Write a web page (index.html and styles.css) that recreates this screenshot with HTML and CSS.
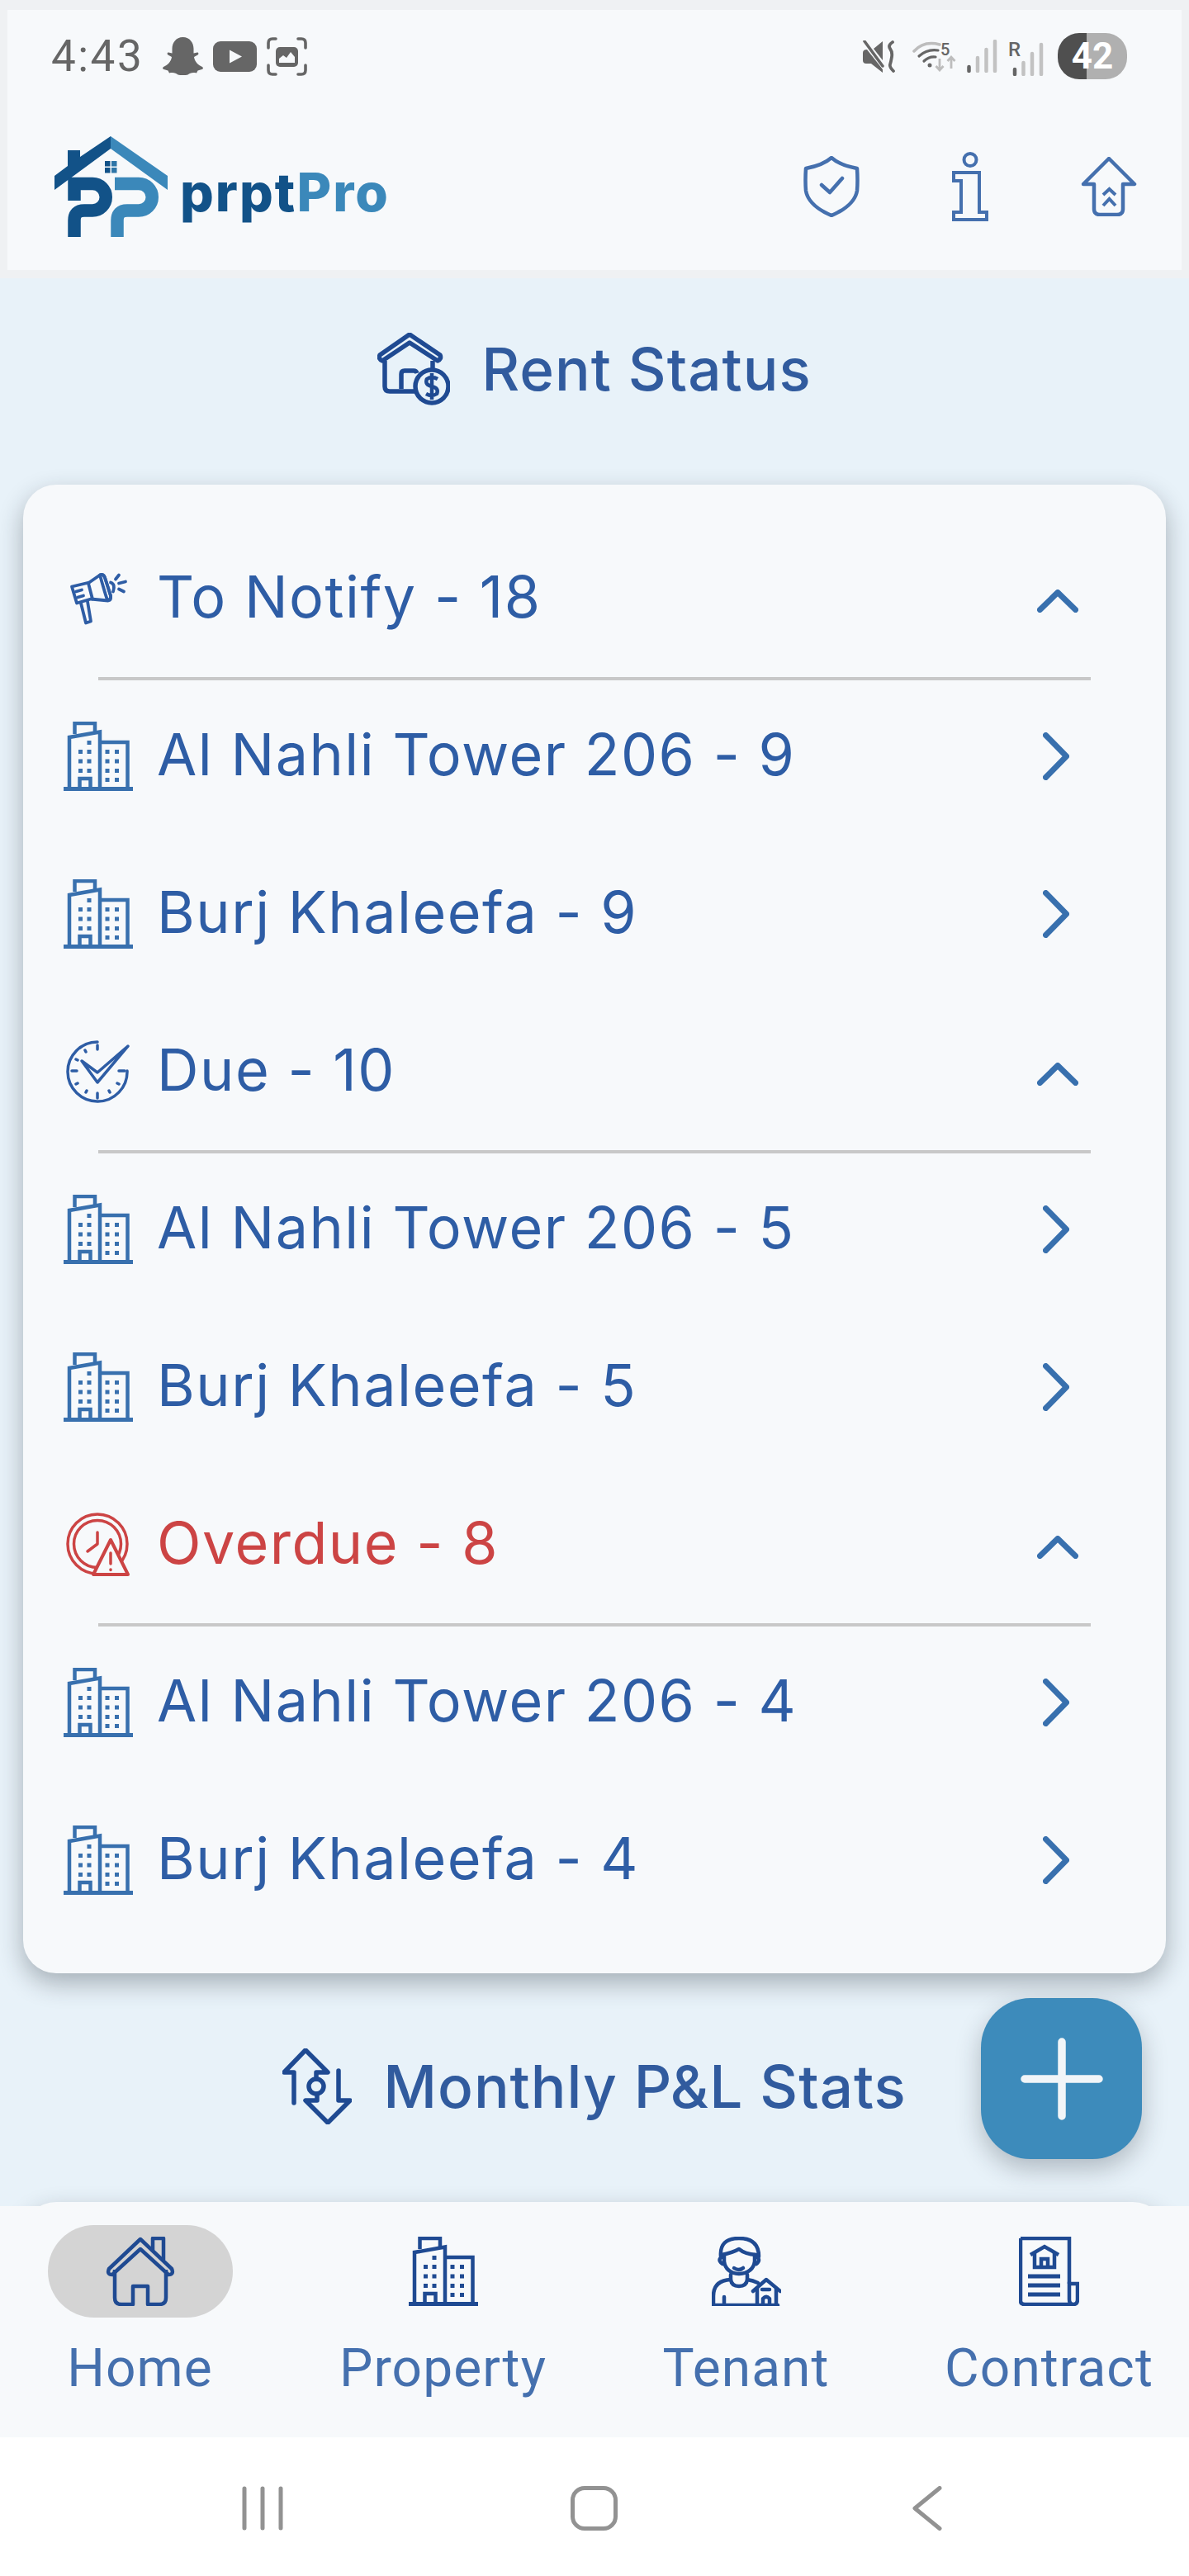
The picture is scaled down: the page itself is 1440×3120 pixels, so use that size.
FILE: index.html
```html
<!DOCTYPE html>
<html lang="en">
<head>
    <meta charset="UTF-8">
    <meta name="viewport" content="width=device-width, initial-scale=1.0">
    <title>Rent Status</title>
    <link rel="stylesheet" href="styles.css">
</head>
<body>

    <!-- Shared icons -->
    <svg class="icon-defs" aria-hidden="true">
        <symbol id="building" viewBox="0 0 84 84">
            <g fill="none" stroke="currentColor" stroke-width="4.5">
                <path d="M13.5 15V2H38V12"/>
                <path d="M7 80V19L44 12.5V80"/>
                <path d="M44 25H77.500V80"/>
                <path d="M19.500 80V69H32.500V80"/>
            </g>
            <path fill="currentColor" d="M0 79H84V84H0Z"/>
            <g fill="currentColor">
                <rect x="28.500" y="23" width="5" height="5"/>
                <rect x="18" y="34" width="5" height="5"/><rect x="28.500" y="34" width="5" height="5"/>
                <rect x="18" y="45.500" width="5" height="5"/><rect x="28.500" y="45.500" width="5" height="5"/>
                <rect x="18" y="57" width="5" height="5"/><rect x="28.500" y="57" width="5" height="5"/>
                <rect x="50.500" y="34" width="5" height="5"/><rect x="62" y="34" width="5" height="5"/>
                <rect x="50.500" y="45.500" width="5" height="5"/><rect x="62" y="45.500" width="5" height="5"/>
                <rect x="50.500" y="57" width="5" height="5"/><rect x="62" y="57" width="5" height="5"/>
                <rect x="50.500" y="68" width="5" height="5"/><rect x="62" y="68" width="5" height="5"/>
            </g>
        </symbol>
        <symbol id="chev-right" viewBox="0 0 32 58">
            <path d="M3.500 3.500L28.500 29L3.500 54.500" fill="none" stroke="currentColor" stroke-width="7" stroke-linecap="round" stroke-linejoin="round"/>
        </symbol>
        <symbol id="chev-up" viewBox="0 0 50 28">
            <path d="M3.500 24.500L25 3.500L46.500 24.500" fill="none" stroke="currentColor" stroke-width="7" stroke-linecap="round" stroke-linejoin="round"/>
        </symbol>
    </svg>

    <!-- Header -->
    <div class="top-frame">
        <div class="header">
            <div class="status-bar">
                <div class="status-left">
                    <span class="clock">4:43</span>
                    <svg class="st-ghost" viewBox="0 0 49 46"><path fill="#666" d="M24.500 0C33 0 37.500 7 37.500 14V19.500L42 18.500C43.500 18.500 44 20.500 42.500 21.500L38 24C38.500 29 43 34 48 36C49.500 37 49 38.500 47.500 39L42.500 40.500L41 43.500C36 42.500 33 43.500 30.500 45.500C26.500 46.500 22.500 46.500 18.500 45.500C16 43.500 13 42.500 8 43.500L6.500 40.500L1.500 39C0 38.500 -.5 37 1 36C6 34 10.500 29 11 24L6.500 21.500C5 20.500 5.500 18.500 7 18.500L11.500 19.500V14C11.500 7 16 0 24.500 0Z"/></svg>
                    <svg class="st-yt" viewBox="0 0 53 37"><rect width="53" height="37" rx="9" fill="#666"/><path d="M20 10.500L35 18.500L20 26.500Z" fill="#f7f9fb"/></svg>
                    <svg class="st-shot" viewBox="0 0 49 47">
                        <g fill="none" stroke="#666" stroke-width="3.600" stroke-linecap="round">
                            <path d="M2 13V7Q2 2 7 2H11"/><path d="M38 2H42Q47 2 47 7V13"/>
                            <path d="M2 34V40Q2 45 7 45H11"/><path d="M38 45H42Q47 45 47 40V34"/>
                        </g>
                        <rect x="11" y="12" width="27" height="24" rx="5" fill="#666"/>
                        <path d="M15 31V26L20 22L24 25L29 18L34 24V31Z" fill="#f7f9fb"/>
                    </svg>
                </div>
                <div class="status-right">
                    <svg class="st-mute" viewBox="0 0 40 39">
                        <path fill="#666" d="M0 15Q0 11 5 11L24 35V39L10 28H4Q0 28 0 24Z"/>
                        <path fill="#666" d="M13 10L24 1V24Z"/>
                        <path d="M3 2L26 36" stroke="#f7f9fb" stroke-width="2"/>
                        <path d="M2 1L24 31" stroke="#666" stroke-width="3.500" stroke-linecap="round"/>
                        <path d="M36 2Q30 6 33 10T35 20T33 29T37 37" fill="none" stroke="#666" stroke-width="3.800" stroke-linecap="round"/>
                    </svg>
                    <svg class="st-wifi" viewBox="0 0 53 38">
                        <path d="M2 13Q14 0 33 5" fill="none" stroke="#bdbdbd" stroke-width="3.500" stroke-linecap="round"/>
                        <path d="M8 19Q18 10 31 12" fill="none" stroke="#666" stroke-width="3.200" stroke-linecap="round"/>
                        <path d="M14 25Q20 19 28 20" fill="none" stroke="#666" stroke-width="3.200" stroke-linecap="round"/>
                        <circle cx="21" cy="30" r="2.500" fill="#666"/>
                        <text x="34" y="18" class="st-five">5</text>
                        <path d="M33 22V36M28.500 31L33 36L37.500 31" fill="none" stroke="#bdbdbd" stroke-width="2.800"/>
                        <path d="M47 34V20M42.500 25L47 20L51.500 25" fill="none" stroke="#bdbdbd" stroke-width="2.800"/>
                    </svg>
                    <svg class="st-signal" viewBox="0 0 37 40">
                        <g fill="none" stroke-width="4.500" stroke-linecap="round">
                            <path d="M2.500 33V38" stroke="#666"/>
                            <path d="M13 22V38" stroke="#c2c2c2"/><path d="M23.500 12V38" stroke="#c2c2c2"/><path d="M34 2V38" stroke="#c2c2c2"/>
                        </g>
                    </svg>
                    <svg class="st-roam" viewBox="0 -6 43 47">
                        <text x="0" y="17" class="st-r">R</text>
                        <g fill="none" stroke-width="4.500" stroke-linecap="round">
                            <path d="M8 33V39" stroke="#666"/>
                            <path d="M18.500 25V39" stroke="#c2c2c2"/><path d="M29 14V39" stroke="#c2c2c2"/><path d="M40 3V39" stroke="#c2c2c2"/>
                        </g>
                    </svg>
                    <div class="battery"><span>42</span></div>
                </div>
            </div>

            <div class="app-bar">
                <div class="logo">
                    <svg class="logo-mark" viewBox="0 0 137 122">
                        <path fill="#125288" d="M68 0V15L0 65V48L16 36V17H31V25Z"/>
                        <path fill="#3b88ba" d="M68 0L137 48V65L68 15Z"/>
                        <g fill="#125288"><rect x="61" y="30" width="6.500" height="6.500"/><rect x="61" y="38" width="6.500" height="6.500"/></g>
                        <g fill="#2f76a8"><rect x="69" y="30" width="6.500" height="6.500"/><rect x="69" y="38" width="6.500" height="6.500"/></g>
                        <g fill="none" stroke-width="15.500">
                            <path stroke="#125288" d="M24 78V57.500H46A16 16 0 0 1 46 90H36Q24 90 24 102V122"/>
                            <path stroke="#3b88ba" d="M73 57.500H102A16 16 0 0 1 102 90H88Q76 90 76 102V122"/>
                        </g>
                    </svg>
                    <div class="logo-text">prpt<span>Pro</span></div>
                </div>
                <div class="app-actions">
                    <svg class="act-shield" viewBox="0 0 68 74">
                        <path d="M34 2Q24 11 3 15Q2 30 3 42Q6 60 34 72Q62 60 65 42Q66 30 65 15Q44 11 34 2Z" fill="none" stroke="#4570ae" stroke-width="4.500" stroke-linejoin="round"/>
                        <path d="M22 35L32 44L47 27" fill="none" stroke="#4570ae" stroke-width="4.500" stroke-linecap="round" stroke-linejoin="round"/>
                    </svg>
                    <svg class="act-info" viewBox="0 0 44 84">
                        <ellipse cx="22" cy="9.500" rx="7.500" ry="7.500" fill="none" stroke="#4570ae" stroke-width="4"/>
                        <path d="M2 25H33V73H42V82H2V73H11V35H2Z" fill="none" stroke="#4570ae" stroke-width="4"/>
                    </svg>
                    <svg class="act-up" viewBox="0 0 68 72">
                        <path d="M34 2L65 33H51V63Q51 70 44 70H23Q16 70 16 63V33H3Z" fill="none" stroke="#4570ae" stroke-width="4.500" stroke-linejoin="round"/>
                        <path d="M27 46L34.500 39L42 46M27 59L34.500 51L42 59" fill="none" stroke="#4570ae" stroke-width="4"/>
                    </svg>
                </div>
            </div>
        </div>
    </div>

    <div class="content">
        <!-- Rent status -->
        <div class="section-title">
            <svg class="title-rent" viewBox="0 0 88 88">
                <g fill="none" stroke="#1f4a92" stroke-width="5.500" stroke-linejoin="round">
                    <path d="M39 2L76 27Q78 32 73 34L39 12L6 34Q1 32 3 27Z"/>
                    <path d="M9 34V65Q9 71 15 71H46"/>
                    <path d="M67 34V44"/>
                    <path d="M29 68V50Q29 46 33 46H44Q47 46 48 49"/>
                    <circle cx="66" cy="65" r="20"/>
                    <path d="M73 56Q66 52 60 56Q57 63 66 65Q75 67 72 74Q66 78 59 74M66 49V81" stroke-width="4.500"/>
                </g>
            </svg>
            <span>Rent Status</span>
        </div>

        <div class="card">
            <div class="row group-head">
                <svg class="row-icon" viewBox="-7 -10.500 84 84">
                    <g fill="none" stroke="#2e5da5" stroke-width="3.800" stroke-linecap="round" stroke-linejoin="round">
                        <path d="M3 17L24 12L37 3Q41 1 43 6L50 28Q51 33 47 34L26 32L9 37Z"/>
                        <path d="M37 3Q41 1 43 6L50 28Q51 33 46 33Q44 28 37 3Z"/>
                        <path d="M23 13L28 32"/>
                        <path d="M14 37L20 61L26 59L22 35"/>
                        <path d="M8 23L15 21M10 30L17 28"/>
                        <path d="M50 12Q56 14 53 23"/>
                        <path d="M56 8L60 3M60 13L68 11M60 20L66 23"/>
                    </g>
                </svg>
                <span class="row-label">To Notify - 18</span>
                <svg class="chev-up"><use href="#chev-up"/></svg>
            </div>
            <div class="divider"></div>
            <div class="row">
                <svg class="row-icon building"><use href="#building"/></svg>
                <span class="row-label">Al Nahli Tower 206 - 9</span>
                <svg class="chev-right"><use href="#chev-right"/></svg>
            </div>
            <div class="row">
                <svg class="row-icon building"><use href="#building"/></svg>
                <span class="row-label">Burj Khaleefa - 9</span>
                <svg class="chev-right"><use href="#chev-right"/></svg>
            </div>

            <div class="row group-head">
                <svg class="row-icon" viewBox="-4 -4 84 84">
                    <g fill="none" stroke="#2e5da5" stroke-width="3.500" stroke-linecap="round" stroke-linejoin="round">
                        <path d="M37 2A36 36 0 1 0 73 37"/>
                        <path d="M37 6V11M6 37H12M37 64V70M63 37H70"/>
                        <path d="M22 12L23 14M11 23L13 24M11 53L13 52M23 63L24 61M52 63L51 61M63 53L61 52"/>
                        <path d="M18 25L37 51L74 7L37 39Z"/>
                    </g>
                </svg>
                <span class="row-label">Due - 10</span>
                <svg class="chev-up"><use href="#chev-up"/></svg>
            </div>
            <div class="divider"></div>
            <div class="row">
                <svg class="row-icon building"><use href="#building"/></svg>
                <span class="row-label">Al Nahli Tower 206 - 5</span>
                <svg class="chev-right"><use href="#chev-right"/></svg>
            </div>
            <div class="row">
                <svg class="row-icon building"><use href="#building"/></svg>
                <span class="row-label">Burj Khaleefa - 5</span>
                <svg class="chev-right"><use href="#chev-right"/></svg>
            </div>

            <div class="row group-head">
                <svg class="row-icon" viewBox="-3 -3 84 84">
                    <g fill="none" stroke="#cc4444" stroke-width="3.500" stroke-linecap="round" stroke-linejoin="round">
                        <circle cx="38" cy="38" r="36"/>
                        <circle cx="38" cy="38" r="28.500"/>
                        <path d="M38 24V38L26 47"/>
                        <path d="M54 33L33 75H75Z" fill="#f7f9fb" stroke-width="4"/>
                        <path d="M54 49V62"/>
                        <path d="M54 69V69.500"/>
                    </g>
                </svg>
                <span class="row-label overdue">Overdue - 8</span>
                <svg class="chev-up"><use href="#chev-up"/></svg>
            </div>
            <div class="divider"></div>
            <div class="row">
                <svg class="row-icon building"><use href="#building"/></svg>
                <span class="row-label">Al Nahli Tower 206 - 4</span>
                <svg class="chev-right"><use href="#chev-right"/></svg>
            </div>
            <div class="row">
                <svg class="row-icon building"><use href="#building"/></svg>
                <span class="row-label">Burj Khaleefa - 4</span>
                <svg class="chev-right"><use href="#chev-right"/></svg>
            </div>
        </div>

        <!-- Monthly stats -->
        <div class="section-title">
            <svg class="title-stats" viewBox="0 0 84 92">
                <g fill="none" stroke="#1f4a92" stroke-width="5.500" stroke-linecap="round" stroke-linejoin="round">
                    <path d="M14 66V29H2L28 2L55 29H41V37"/>
                    <path d="M68 27V63H82L55 90L28 63H42V55"/>
                    <circle cx="41" cy="46" r="9"/>
                </g>
            </svg>
            <span>Monthly P&amp;L Stats</span>
        </div>

        <div class="card card-next"></div>

        <!-- Add button -->
        <div class="fab">
            <svg width="100" height="100" viewBox="0 0 100 100">
                <path d="M5 50H95M50 5V95" stroke="#f1f5f8" stroke-width="9.500" stroke-linecap="round"/>
            </svg>
        </div>
    </div>

    <!-- Bottom tabs -->
    <div class="tab-bar">
        <div class="tab">
            <div class="tab-icon active">
                <svg width="84" height="84" viewBox="0 0 84 84">
                    <g fill="none" stroke="#1f4a92" stroke-width="4.500" stroke-linejoin="round">
                        <path d="M42 3L80 39Q83 46 76 46L42 15L8 46Q1 46 4 39Z"/>
                        <path d="M57 16V2H70V28"/>
                        <path d="M11 40V74Q11 82 19 82H33V60H51V82H65Q73 82 73 74V40"/>
                    </g>
                </svg>
            </div>
            <span>Home</span>
        </div>
        <div class="tab">
            <div class="tab-icon">
                <svg class="tab-building"><use href="#building"/></svg>
            </div>
            <span>Property</span>
        </div>
        <div class="tab">
            <div class="tab-icon">
                <svg width="84" height="84" viewBox="0 0 84 84">
                    <g fill="none" stroke="#1f4a92" stroke-width="4.500" stroke-linecap="round" stroke-linejoin="round">
                        <path d="M11 24Q9 2 33 2Q57 2 57 24"/>
                        <path d="M12 22Q24 20 33 15Q40 21 54 22"/>
                        <path d="M15 22V30Q17 44 33 45Q50 44 52 30V22"/>
                        <path d="M13 24Q6 28 13 33M54 24Q60 28 54 33"/>
                        <path d="M27 38Q33 42 38 38"/>
                        <path d="M23 46V52Q24 60 33 60Q42 60 43 52V46"/>
                        <path d="M23 52Q2 53 2 72V83H80"/>
                        <path d="M43 52Q50 53 56 56"/>
                        <path d="M15 73V83"/>
                        <path d="M50 66L66 52L83 66"/>
                        <path d="M55 63V83M78 63V83"/>
                        <path d="M61 64H70M62 83V75Q66 71 70 75V83"/>
                    </g>
                </svg>
            </div>
            <span>Tenant</span>
        </div>
        <div class="tab">
            <div class="tab-icon">
                <svg width="73" height="84" viewBox="0 0 73 84">
                    <g fill="none" stroke="#1f4a92" stroke-width="4.500">
                        <path d="M2 2H61V57"/>
                        <path d="M2 2V78Q2 82 7 82H66Q71 82 71 76V57H61V76Q61 82 66 82"/>
                        <path d="M14 22L31 12L48 22"/>
                        <path d="M19 20V37H43V20"/>
                        <path d="M27 37V27H35V37"/>
                        <path d="M11 48H50M11 59H50M11 70H50" stroke-width="5"/>
                    </g>
                </svg>
            </div>
            <span>Contract</span>
        </div>
    </div>

    <!-- System navigation -->
    <div class="sys-nav">
        <svg class="sys-recent" viewBox="0 0 50 54">
            <path d="M3 3V51M25 3V51M47 3V51" stroke="#929292" stroke-width="5" stroke-linecap="round"/>
        </svg>
        <div class="sys-home"></div>
        <svg class="sys-back" viewBox="0 0 36 54">
            <path d="M33 2.500L3 27L33 51.500" fill="none" stroke="#929292" stroke-width="5" stroke-linecap="round" stroke-linejoin="round"/>
        </svg>
    </div>
</body>
</html>
```

FILE: styles.css
```css
/* Basic styling */
html, body {
    margin: 0;
    padding: 0;
}

body {
    width: 1440px;
    height: 3120px;
    overflow: hidden;
    display: flex;
    flex-direction: column;
    background-color: #e8f2f9;
    font-family: Inter, "Noto Sans", sans-serif;
    color: #2e5da5;
}

.icon-defs {
    position: absolute;
    width: 0;
    height: 0;
}

/* Header */
.top-frame {
    background-color: #eff1f3;
    padding: 12px 9px 10px;
}

.header {
    background-color: #f7f9fb;
    height: 315px;
}

.status-bar {
    height: 112px;
    display: flex;
    justify-content: space-between;
    align-items: center;
    padding: 0 66px 0 53px;
}

.status-left, .status-right {
    display: flex;
    align-items: center;
}

.clock {
    font-family: Roboto, sans-serif;
    font-size: 53px;
    line-height: 1;
    letter-spacing: 2.500px;
    color: #666;
    margin-right: 23px;
}

.st-ghost { width: 49px; height: 46px; margin-right: 12px; }
.st-yt { width: 53px; height: 37px; margin-right: 12px; }
.st-shot { width: 49px; height: 47px; }

.st-mute { width: 40px; height: 39px; margin-right: 20px; }
.st-wifi { width: 53px; height: 38px; margin-right: 13px; }
.st-signal { width: 37px; height: 40px; margin-right: 13px; }
.st-roam { width: 43px; height: 47px; margin: 0 17px 0 0; }

.st-five, .st-r {
    font-family: Roboto, sans-serif;
    font-weight: 500;
    fill: #666;
}

.st-five { font-size: 20px; }
.st-r { font-size: 24px; }

.battery {
    width: 84px;
    height: 56px;
    border-radius: 26px;
    background: linear-gradient(to right, #4f4f4f 42%, #b0b0b0 42%);
    color: white;
    font-family: Roboto, sans-serif;
    font-weight: 700;
    font-size: 44px;
    line-height: 56px;
    text-align: center;
}

.app-bar {
    height: 203px;
    display: flex;
    justify-content: space-between;
    padding: 41px 54px 0 57px;
    box-sizing: border-box;
}

.logo {
    display: flex;
    align-items: flex-end;
    height: 122px;
}

.logo-mark {
    width: 137px;
    height: 122px;
    margin-right: 15px;
}

.logo-text {
    font-weight: 800;
    font-size: 64px;
    line-height: 1;
    letter-spacing: 2px;
    color: #125288;
    padding-bottom: 22px;
}

.logo-text span {
    color: #3b88ba;
}

.app-actions {
    display: flex;
    align-items: center;
    height: 122px;
}

.act-shield { width: 68px; height: 74px; margin-right: 112px; }
.act-info { width: 44px; height: 84px; margin-right: 112px; }
.act-up { width: 68px; height: 72px; }

/* Main content */
.content {
    position: relative;
    flex: 1;
    min-height: 0;
    overflow: hidden;
}

.section-title {
    height: 222px;
    box-sizing: border-box;
    padding-bottom: 2px;
    display: flex;
    justify-content: center;
    align-items: center;
    gap: 38px;
    font-size: 71px;
    letter-spacing: 1px;
    font-weight: 500;
    color: #315b9e;
}

.title-rent { width: 88px; height: 88px; }
.title-stats { width: 84px; height: 92px; }

.card {
    margin: 28px 28px 27px;
    padding: 42px 0;
    background-color: #f7f9fb;
    border-radius: 40px;
    box-shadow: 0 12px 30px rgba(30, 40, 50, 0.33);
}

.card-next {
    height: 100px;
}

.row {
    height: 191px;
    display: flex;
    align-items: center;
    padding: 0 103px 0 49px;
}

.row-icon {
    flex: none;
    width: 84px;
    height: 84px;
}

.building {
    color: #3870ae;
}

.row-label {
    flex: 1;
    margin-left: 29px;
    padding-bottom: 3px;
    font-size: 70px;
    line-height: 1;
    letter-spacing: 1.500px;
}

.overdue {
    color: #cc4444;
}

.chev-up {
    width: 50px;
    height: 28px;
    margin: 6px 3px 0 0;
    color: #3870ae;
}

.chev-right {
    width: 32px;
    height: 58px;
    margin: 0 14px 0 0;
    color: #3870ae;
}

.divider {
    height: 4px;
    margin: 0 91px -4px;
    background-color: #c8c8c8;
}

/* Add button */
.fab {
    position: absolute;
    left: 1188px;
    top: 2083px;
    width: 195px;
    height: 195px;
    border-radius: 60px;
    background-color: #3d8bbb;
    box-shadow: 0 12px 30px rgba(30, 40, 50, 0.28);
    display: flex;
    align-items: center;
    justify-content: center;
}

/* Bottom tabs */
.tab-bar {
    height: 280px;
    display: grid;
    grid-template-columns: repeat(4, 367px);
    justify-content: center;
    background-color: #f7f9fb;
    font-family: Roboto, sans-serif;
    font-size: 64px;
    letter-spacing: 1.100px;
    color: #4570ae;
}

.tab {
    display: flex;
    flex-direction: column;
    align-items: center;
    padding-top: 23px;
}

.tab-icon {
    width: 224px;
    height: 112px;
    border-radius: 56px;
    display: flex;
    align-items: center;
    justify-content: center;
}

.tab-icon.active {
    background-color: #d4d4d4;
}

.tab-building {
    width: 84px;
    height: 84px;
    color: #1f4a92;
}

.tab span {
    margin-top: 24px;
    line-height: 75px;
}

/* System navigation */
.sys-nav {
    height: 168px;
    box-sizing: border-box;
    flex: none;
    background-color: white;
    padding-top: 4px;
    display: grid;
    grid-template-columns: 293px 49px 349px 57px 357px 36px;
    align-items: center;
}

.sys-recent {
    grid-column: 2;
    width: 50px;
    height: 54px;
}

.sys-home {
    grid-column: 4;
    box-sizing: border-box;
    width: 57px;
    height: 54px;
    border: 5px solid #929292;
    border-radius: 17px;
}

.sys-back {
    grid-column: 6;
    width: 36px;
    height: 54px;
}
```
